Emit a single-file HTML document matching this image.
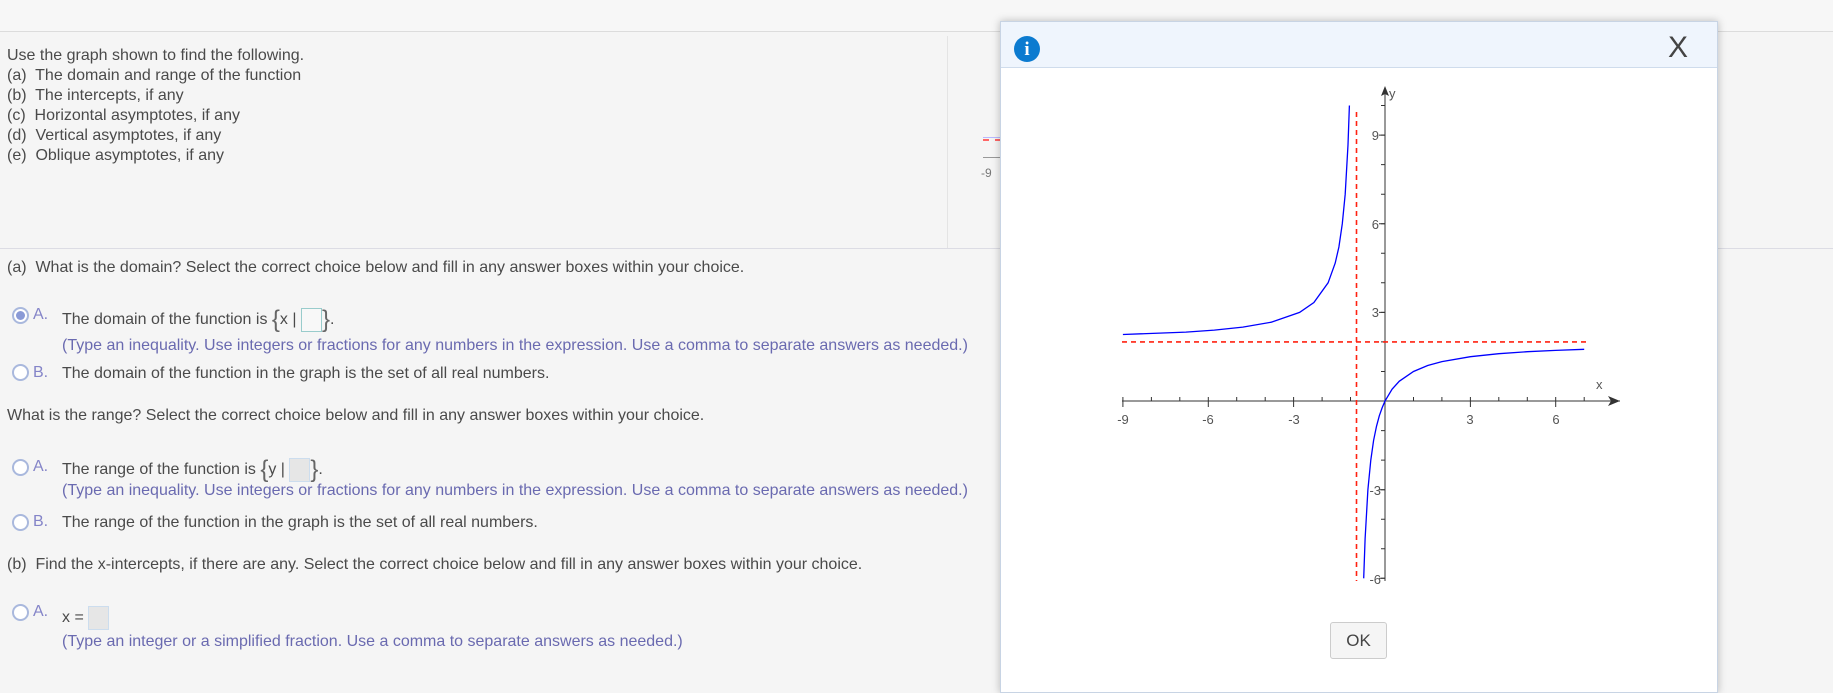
<!DOCTYPE html>
<html><head><meta charset="utf-8"><style>
body{margin:0;width:1833px;height:682px;overflow:hidden;background:#f5f5f5;font-family:"Liberation Sans",Arial,sans-serif;position:relative}
.t{position:absolute;font-size:16px;color:#4a4a4a;white-space:nowrap;line-height:20px}
.h{color:#6a6ab0}
.lab{position:absolute;font-size:16px;color:#8484c8;font-weight:normal}
.rad{position:absolute;width:13px;height:13px;border:2px solid #a9b8dd;border-radius:50%;background:#fff}
.rad.on::after{content:"";position:absolute;left:2px;top:2px;width:9px;height:9px;border-radius:50%;background:#8a9ad6}
.box{display:inline-block;width:19px;height:22px;border:1px solid #9cc;background:#f8f8f8;vertical-align:middle}
.box.g{background:#e6e6e6;border-color:#cde}
.br{font-size:24px;color:#666;vertical-align:middle;font-weight:100}
</style></head><body>
<div style="position:absolute;left:0;top:0;width:1833px;height:31px;background:#f7f7f7;border-bottom:1px solid #dcdcdc"></div>
<div style="position:absolute;left:947px;top:36px;width:1px;height:212px;background:#e4e4e4"></div>
<div style="position:absolute;left:0;top:248px;width:1833px;height:1px;background:#dcdce4"></div>
<div class="t" style="left:7px;top:46px">Use the graph shown to find the following.<br>(a)&nbsp; The domain and range of the function<br>(b)&nbsp; The intercepts, if any<br>(c)&nbsp; Horizontal asymptotes, if any<br>(d)&nbsp; Vertical asymptotes, if any<br>(e)&nbsp; Oblique asymptotes, if any</div>
<div class="t" style="left:981px;top:163px;font-size:12px;color:#777">-9</div>
<div style="position:absolute;left:983px;top:137px;width:18px;height:1px;background:#b8b8ff"></div>
<div style="position:absolute;left:983px;top:139px;width:18px;height:0;border-top:2px dashed #f66"></div>
<div style="position:absolute;left:983px;top:157px;width:18px;height:4px;border-top:1px solid #999"></div>
<div class="t" style="left:7px;top:258px">(a)&nbsp; What is the domain? Select the correct choice below and fill in any answer boxes within your choice.</div>
<div class="rad on" style="left:12px;top:307px"></div><div class="lab" style="left:33px;top:306px">A.</div>
<div class="t" style="left:62px;top:308px">The domain of the function is <span class="br">{</span>x | <span class="box"></span><span class="br">}</span>.</div>
<div class="t h" style="left:62px;top:336px">(Type an inequality. Use integers or fractions for any numbers in the expression. Use a comma to separate answers as needed.)</div>
<div class="rad" style="left:12px;top:364px"></div><div class="lab" style="left:33px;top:364px">B.</div>
<div class="t" style="left:62px;top:364px">The domain of the function in the graph is the set of all real numbers.</div>
<div class="t" style="left:7px;top:406px">What is the range? Select the correct choice below and fill in any answer boxes within your choice.</div>
<div class="rad" style="left:12px;top:459px"></div><div class="lab" style="left:33px;top:458px">A.</div>
<div class="t" style="left:62px;top:458px">The range of the function is <span class="br">{</span>y | <span class="box g"></span><span class="br">}</span>.</div>
<div class="t h" style="left:62px;top:481px">(Type an inequality. Use integers or fractions for any numbers in the expression. Use a comma to separate answers as needed.)</div>
<div class="rad" style="left:12px;top:514px"></div><div class="lab" style="left:33px;top:513px">B.</div>
<div class="t" style="left:62px;top:513px">The range of the function in the graph is the set of all real numbers.</div>
<div class="t" style="left:7px;top:555px">(b)&nbsp; Find the x-intercepts, if there are any. Select the correct choice below and fill in any answer boxes within your choice.</div>
<div class="rad" style="left:12px;top:604px"></div><div class="lab" style="left:33px;top:603px">A.</div>
<div class="t" style="left:62px;top:606px">x = <span class="box g"></span></div>
<div class="t h" style="left:62px;top:632px">(Type an integer or a simplified fraction. Use a comma to separate answers as needed.)</div>

<div style="position:absolute;left:1000px;top:21px;width:716px;height:670px;background:#fff;border:1px solid #c8d4e4;box-shadow:0 0 8px rgba(0,0,0,.25)">
 <div style="height:45px;background:#eff5fd;border-bottom:1px solid #cfdcec"></div>
</div>
<div style="position:absolute;left:1014px;top:36px;width:26px;height:26px;border-radius:50%;background:#0c7bd0;color:#fff;font:bold 19px 'Liberation Serif',serif;text-align:center;line-height:27px">i</div>
<div style="position:absolute;left:1668px;top:31px;font-size:30px;color:#444;font-family:'Liberation Sans',sans-serif">X</div>
<div style="position:absolute;left:1330px;top:622px;width:55px;height:35px;border:1px solid #ccc;border-radius:3px;background:#f5f5f5;font-size:17px;color:#444;text-align:center;line-height:35px">OK</div>

<svg style="position:absolute;left:0;top:0" width="1833" height="682" font-family="Liberation Sans,sans-serif" font-size="13" fill="#555">
<g stroke="#333" stroke-width="1" fill="none">
<line x1="1122" y1="401" x2="1620" y2="401"/>
<line x1="1385" y1="581" x2="1385" y2="90"/>
</g>
<path d="M1620 401 l-12 -5 l3 5 l-3 5z" fill="#333"/>
<path d="M1385 86 l-4 10 l4 -2 l4 2z" fill="#333"/>
<g stroke="#333" stroke-width="1">
<path d="M1122.9 401v-4M1151.4 401v-4M1179.8 401v-4M1208.3 401v-4M1236.7 401v-4M1265.2 401v-4M1293.6 401v-4M1322.1 401v-4M1350.5 401v-4M1413.5 401v-4M1441.9 401v-4M1470.4 401v-4M1498.8 401v-4M1527.3 401v-4M1555.7 401v-4M1584.2 401v-4"/>
<path d="M1122.9 401v6M1208.3 401v6M1293.6 401v6M1470.4 401v6M1555.7 401v6"/>
<path d="M1385 371.5h-4M1385 341.9h-4M1385 312.4h-4M1385 282.8h-4M1385 253.3h-4M1385 223.7h-4M1385 194.2h-4M1385 164.6h-4M1385 135.1h-4M1385 105.5h-4M1385 430.6h-4M1385 460.1h-4M1385 489.7h-4M1385 519.2h-4M1385 548.8h-4M1385 578.3h-4"/>
<path d="M1385 312.4h-6M1385 223.7h-6M1385 135.1h-6M1385 489.7h-6M1385 578.3h-6"/>
</g>
<g text-anchor="middle">
<text x="1123" y="424">-9</text><text x="1208" y="424">-6</text><text x="1294" y="424">-3</text><text x="1470" y="424">3</text><text x="1556" y="424">6</text>
</g>
<g text-anchor="end">
<text x="1379" y="140">9</text><text x="1379" y="229">6</text><text x="1379" y="317">3</text><text x="1381" y="495">-3</text><text x="1381" y="584">-6</text>
</g>
<text x="1389" y="98">y</text><text x="1596" y="389">x</text>
<g stroke="#f21" stroke-width="1.6" stroke-dasharray="5,4" fill="none">
<line x1="1122" y1="341.9" x2="1590" y2="341.9"/>
<line x1="1356.5" y1="112" x2="1356.5" y2="581"/>
</g>
<path fill="none" stroke="#00f" stroke-width="1.3" d="M1122.9 334.5 L1185.9 332.1 L1214.3 330.1 L1242.8 327.1 L1271.2 322.2 L1299.6 312.4 L1313.9 302.5 L1328.1 282.8 L1335.2 263.1 L1338.9 247 L1342.3 223.7 L1345.2 194.2 L1348 144.9 L1349.4 105.5 M1363.7 578.3 L1365.1 538.9 L1367.9 489.7 L1370.8 460.1 L1373.6 440.4 L1376.5 426.3 L1379.3 415.8 L1382.2 407.6 L1385 401 L1392.1 389.2 L1399.2 381.3 L1413.5 371.5 L1427.7 365.5 L1441.9 361.6 L1470.4 356.7 L1498.8 353.7 L1527.3 351.7 L1555.7 350.4 L1584.2 349.3"/>
</svg>
</body></html>
